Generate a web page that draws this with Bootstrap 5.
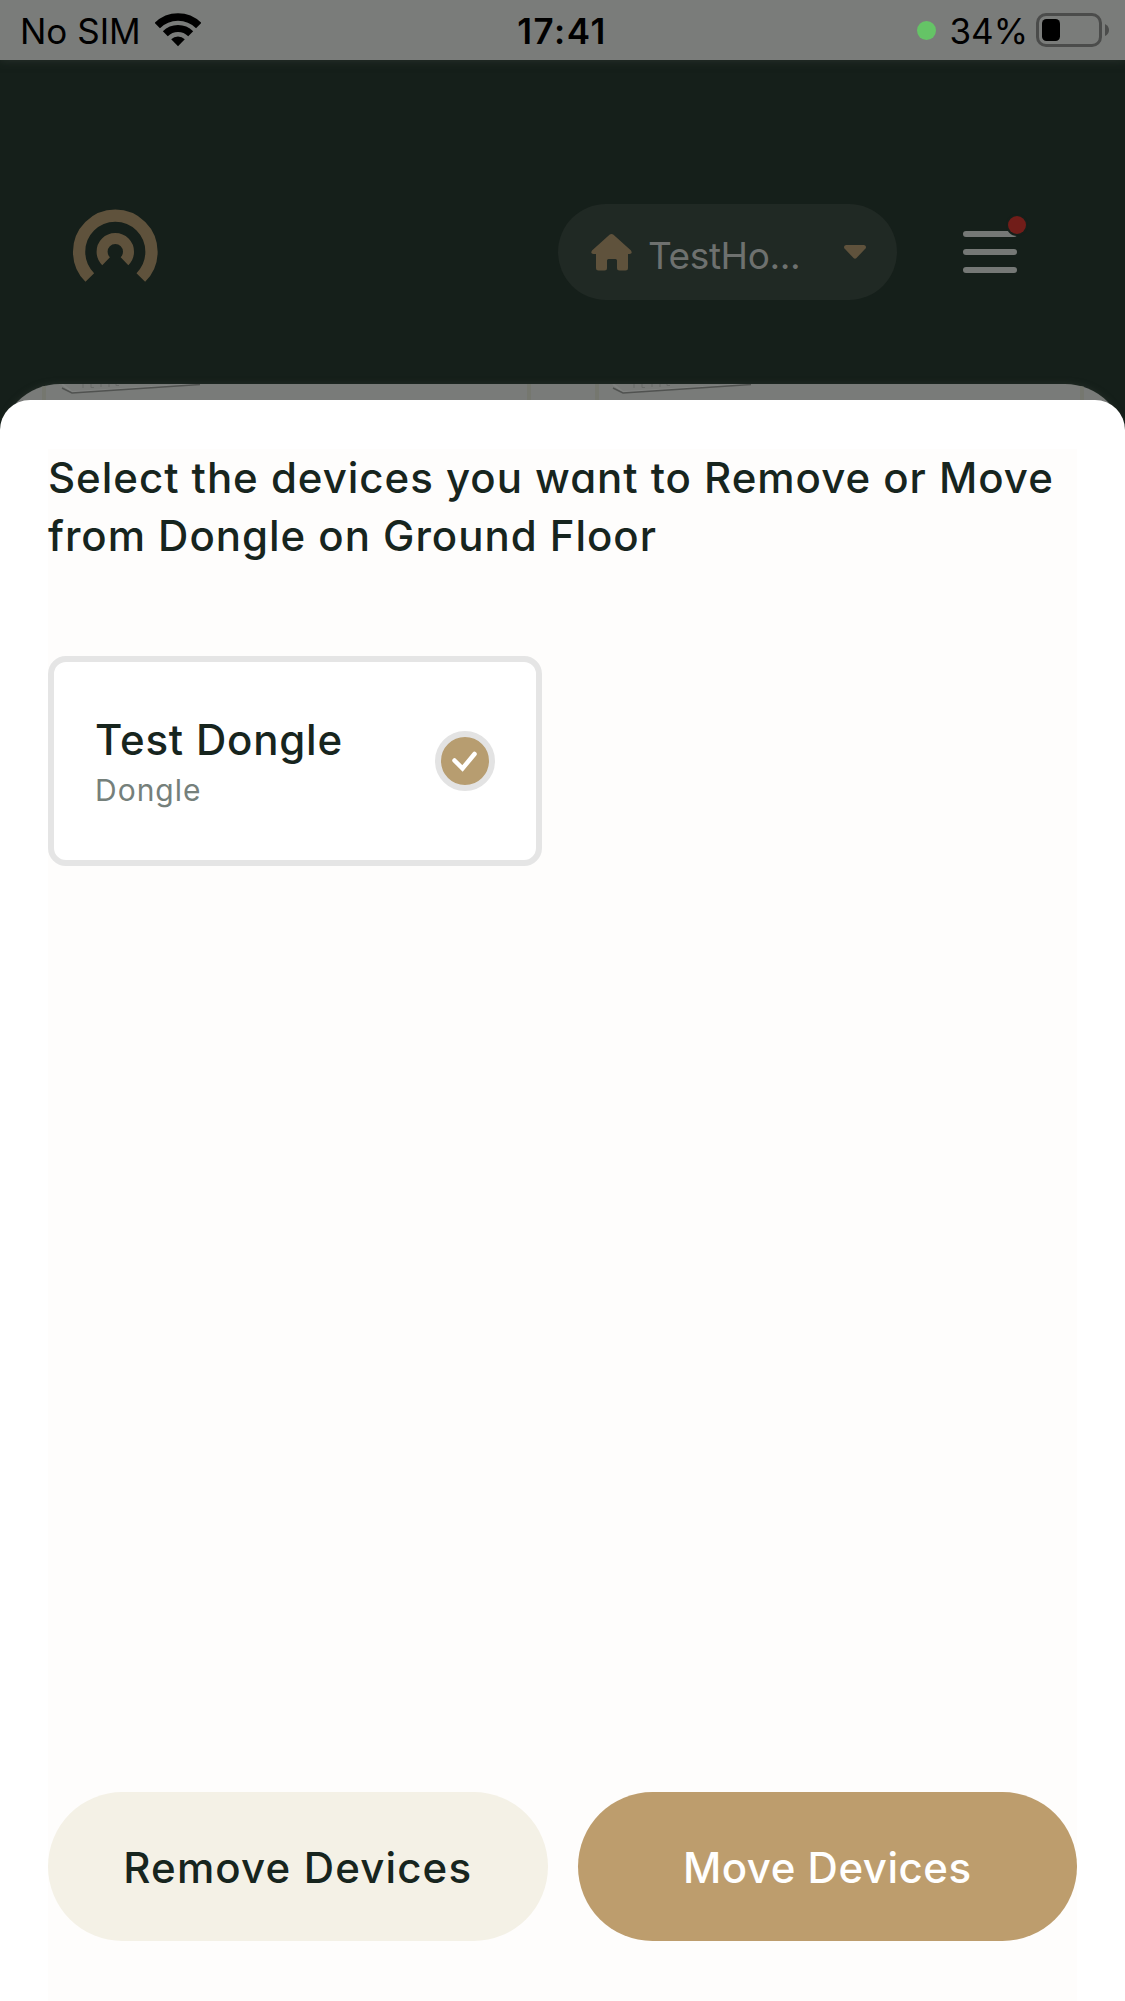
<!DOCTYPE html>
<html lang="en">
<head>
<meta charset="utf-8">
<meta name="viewport" content="width=device-width, initial-scale=1">
<title>Remove or Move Devices</title>
<link rel="stylesheet" href="https://cdn.jsdelivr.net/npm/bootstrap@5.3.0/dist/css/bootstrap.min.css">
<style>
html, body { height: 100%; }
body { font-family: Inter, "Liberation Sans", sans-serif; background: #151f1a; color: #17251e; }
svg { display: block; flex: none; }
.screen { width: 1125px; height: 2001px; }
.status { height: 60px; padding: 0 15px 0 20px; background: #7a7c7a; color: #000; font-size: 35px; line-height: 60px; box-shadow: 0 0 9px #2a332d; }
.status > div { flex: 1 1 0; }
.status span { padding-top: 2px; }
.clock { font-weight: 600; letter-spacing: 1.5px; margin-right: 6px; }
.wifi { margin-left: 14px; }
.battery { margin-left: 8px; }
.live-dot { width: 19px; height: 19px; background: #65c466; margin-right: 13px; }
.app-head { height: 340px; padding: 144px 97px 0 72px; }
.home-pill { width: 339px; height: 96px; background: #202924; color: #6e716f; font-size: 37px; font-weight: 400; padding: 0 31px 0 33px; margin-right: 63px; }
.home-name { margin-left: 16px; padding-top: 8px; letter-spacing: -.4px; }
.under-sheet { height: 80px; margin-top: -16px; border-radius: 60px 60px 0 0; background: #797b79; box-shadow: 0 0 6px #262f29; overflow: hidden; }
.sheet { margin-top: -64px; padding: 49px 48px 0; border-radius: 30px 30px 0 0; background: #fff; }
.panel { background: #fefdfc; }
.ask { font-size: 42px; line-height: 58px; font-weight: 500; letter-spacing: .97px; margin: 0 0 91px; font-feature-settings: "cv11"; }
.device { width: 494px; height: 210px; border: 6px solid #e5e5e5; border-radius: 18px; padding: 53px 41px 0; background: #fff; }
.dev-name { font-size: 42px; line-height: 50px; font-weight: 500; letter-spacing: .8px; }
.dev-type { font-size: 30px; line-height: 51px; color: #75807b; letter-spacing: 1px; }
.tick { width: 60px; height: 60px; border: 6px solid #e3e3e3; background: #b79d70; margin-top: 16px; }
.actions { gap: 30px; margin-bottom: 60px; }
.act { height: 149px; padding: 2px 0 0; font-size: 42px; font-weight: 500; border: 0; flex: 1 1 0; }
.act-remove, .act-remove:hover { background: #f4f1e6; color: #17251e; letter-spacing: 1.15px; }
.act-move, .act-move:hover { background: #bd9d6d; color: #fff; letter-spacing: .5px; }
</style>
<script src="https://cdn.jsdelivr.net/npm/bootstrap@5.3.0/dist/js/bootstrap.bundle.min.js"></script>
</head>
<body>
<div class="screen d-flex flex-column overflow-hidden">
  <div class="status d-flex align-items-center position-relative">
    <div class="d-flex align-items-center">
      <span>No SIM</span>
      <svg class="wifi" width="46" height="34" viewBox="0 0 46 34" fill="none" stroke="#000"><path d="M2.3 12.6a29.2 29.2 0 0 1 41.4 0" stroke-width="7.5"/><path d="M10.3 20.8a18 18 0 0 1 25.4 0" stroke-width="7"/><path d="M23 33.3 16.2 26.3a9.9 9.9 0 0 1 13.6 0z" fill="#000" stroke="none"/></svg>
    </div>
    <span class="clock">17:41</span>
    <div class="d-flex align-items-center justify-content-end">
      <span class="live-dot rounded-circle"></span>
      <span>34%</span>
      <svg class="battery" width="74" height="34" viewBox="0 0 74 34"><rect x="1.5" y="1.5" width="63" height="31" rx="8.5" fill="none" stroke="#4b4c4b" stroke-width="3"/><rect x="6" y="6" width="18" height="22" rx="4.5"/><path d="M69 11q4 2 4 6t-4 6z" fill="#4b4c4b"/></svg>
    </div>
  </div>

  <header class="app-head d-flex align-items-start flex-shrink-0">
    <svg class="me-auto" width="87" height="84" viewBox="0 0 87 84" fill="none" stroke="#5f523c"><path d="M17.8 73.5a36.2 36.2 0 1 1 51 0" stroke-width="12.3"/><path d="M34.1 57.2a13.2 13.2 0 1 1 18.4 0" stroke-width="11"/></svg>
    <div class="home-pill rounded-pill d-flex align-items-center">
      <svg width="41" height="37" viewBox="0 0 41 37" fill="#5f523c"><path d="M18.5.8q2-1.6 4 0L40 16.5q2 3.5-1.5 3.5H37v14q0 2.5-2.5 2.5h-6q-2.5 0-2.5-2.5v-7.5q0-1.5-1.5-1.5h-7q-1.5 0-1.5 1.5V34q0 2.5-2.5 2.5h-6Q5 36.5 5 34V20H2.5Q-1 20 1 16.5z"/></svg>
      <span class="home-name">TestHo...</span>
      <svg class="ms-auto" width="22" height="14" viewBox="0 0 22 14" fill="#5f523c"><path d="M2 0h18q3 .8 1.5 3.500L12.5 13q-1.5 1.5-3 0L.5 3.5Q-1 .8 2 0z"/></svg>
    </div>
    <svg width="68" height="72" viewBox="0 0 68 72"><path d="M6 30h48M6 48h48M6 66h48" stroke="#757876" stroke-width="6" stroke-linecap="round"/><circle cx="57" cy="21" r="11" fill="#151f1a"/><circle cx="57" cy="21" r="9" fill="#711d19"/></svg>
  </header>

  <div class="under-sheet flex-shrink-0">
    <svg width="1125" height="16" viewBox="0 0 1125 16" fill="none"><path d="M44 0v16M529 0v16M597 0v16M1082 0v16" stroke="#75776f" stroke-width="4"/><g id="dev"><path d="M62 0 72 8 200 0" stroke="#808280" stroke-width="2"/><path d="M62 4 72 9 200 .5" stroke="#505250" stroke-width="1.500"/><path d="M83 0v4M91 0v3.500h3M101 0v3M109 0v3M116 0v1.500h3" stroke="#686a68"/></g><use href="#dev" x="551"/></svg>
  </div>

  <main class="sheet position-relative flex-grow-1 d-flex flex-column">
    <div class="panel flex-grow-1 d-flex flex-column">
      <h1 class="ask"><span class="text-nowrap">Select the devices you want to Remove or Move</span><br>from Dongle on Ground Floor</h1>
      <div class="device d-flex justify-content-between align-items-start">
        <div>
          <div class="dev-name">Test Dongle</div>
          <div class="dev-type">Dongle</div>
        </div>
        <span class="tick rounded-circle"><svg width="48" height="48" viewBox="0 0 48 48"><path d="M13.5 23.5l8 8L33.500 17" fill="none" stroke="#fff" stroke-width="4.5" stroke-linecap="round"/></svg></span>
      </div>
      <div class="actions d-flex mt-auto">
        <button class="btn act act-remove rounded-pill">Remove Devices</button>
        <button class="btn act act-move rounded-pill">Move Devices</button>
      </div>
    </div>
  </main>
</div>
</body>
</html>
